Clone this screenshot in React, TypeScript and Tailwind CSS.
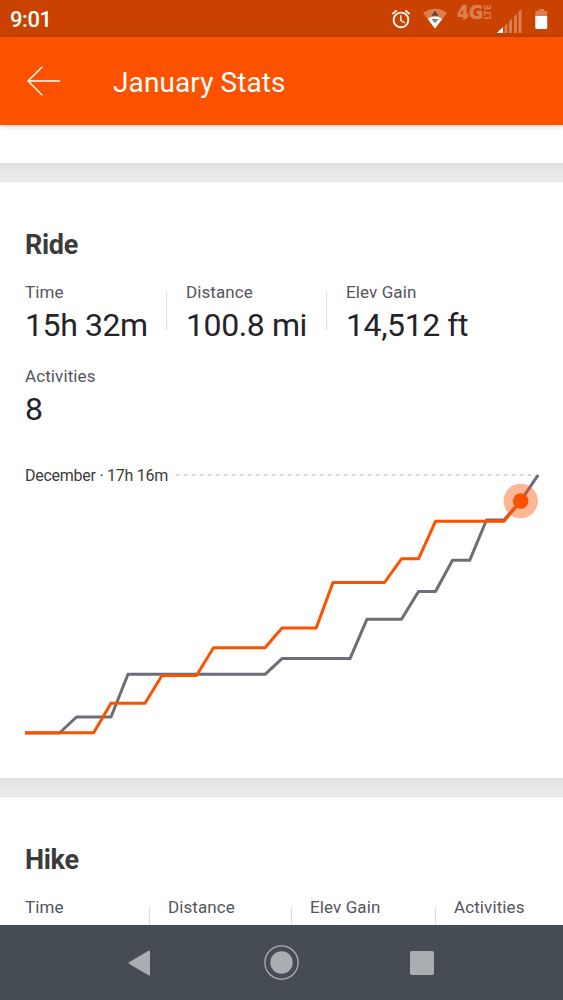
import { MdAccessAlarm } from "react-icons/md";

interface Stat {
  label: string;
  value: string;
  width: string;
}

const RIDE_STATS: Stat[] = [
  { label: "Time", value: "15h 32m", width: "w-[161px]" },
  { label: "Distance", value: "100.8 mi", width: "w-[160px]" },
  { label: "Elev Gain", value: "14,512 ft", width: "w-[160px]" },
];

const HIKE_STATS = [
  { label: "Time", width: "w-[143px]" },
  { label: "Distance", width: "w-[142px]" },
  { label: "Elev Gain", width: "w-[144px]" },
  { label: "Activities", width: "w-[100px]" },
];

const DECEMBER =
  "25,733 59.5,733 76.5,717 111,717 128,674.3 265,674.3 282,658.6 350,658.6 367,619.2 401.5,619.2 418.5,591.5 435.5,591.5 452.5,560.3 469.7,560.3 486.5,520 504,520 521,500.5 537.5,475.8";

const JANUARY =
  "25,732.8 93.7,732.8 111,703.3 145,703.3 162,675.5 196.5,675.5 213.5,647.8 265,647.8 282,628 316.2,628 333,582.5 384.5,582.5 401.5,558.8 418.5,558.8 435.5,521.3 504,521.3 520.7,501";

function StatusBar() {
  return (
    <div className="flex h-[37px] shrink-0 items-center justify-between bg-[#c94200] pl-[10px] text-white">
      <span className="mt-[3px] text-[22px] leading-none font-medium tracking-[-0.4px]">9:01</span>
      <div className="flex h-full items-start">
        <MdAccessAlarm className="mt-[8px] mr-[10px] size-[22px]" />
        <svg className="mt-[8px] mr-[9px] h-[21px] w-[26px]" viewBox="0 0 26 21">
          <path d="M1 5C8 -.7 18 -.7 25 5L13 20.5Z" fill="#db7f50" />
          <path d="M5.8 11C10 7.7 16 7.7 20.2 11L13 20.5Z" fill="#fff" />
          <path d="M13 2.6l3.6 5.2H9.4z" fill="#6b4030" />
          <path d="M9.4 11h7.2L13 15.3z" fill="#7b8482" />
        </svg>
        <svg className="mt-[4px] mr-[6px] h-[17px] w-[34px] overflow-visible font-['DejaVu_Sans']" viewBox="0 0 34 17" fill="#db7f50" stroke="#db7f50">
          <text x="0" y="15" fontSize="19" fontWeight="700" strokeWidth=".6" textLength="26" lengthAdjust="spacingAndGlyphs">4G</text>
          <text transform="translate(33.5 15.5) rotate(-90)" fontSize="8.5" fontWeight="700" strokeWidth="0" textLength="15" lengthAdjust="spacingAndGlyphs">LTE</text>
        </svg>
        <svg className="mt-[8px] mr-[13px] h-[25px] w-[25px]" viewBox="0 0 25 25">
          <path d="M0 25V24.5L5.5 19.5V25ZM7.5 25V18L10.5 15V25ZM12 25V13.5L15 10.5V25ZM17 25V8.5L19.8 5.7V25ZM21.5 25V4L24.5 1V25Z" fill="#db7f50" />
          <path d="M0 25L6 19V25Z" fill="#fff" />
        </svg>
        <svg className="mt-[9px] mr-[15px] h-[20px] w-[13px]" viewBox="0 0 13 20">
          <path d="M4 0h5v2h3.2V8H.3V2H4z" fill="#db7f50" />
          <path d="M.3 7h11.9v12a1 1 0 0 1-1 1H1.3a1 1 0 0 1-1-1z" fill="#fff" />
        </svg>
      </div>
    </div>
  );
}

function Header() {
  return (
    <header className="relative flex h-[88px] shrink-0 items-center bg-[#fc5200] pl-[27px] text-white shadow-[0_1px_5px_rgba(0,0,0,0.25)]">
      <svg className="h-[30px] w-[34px]" viewBox="0 0 34 30" fill="none" stroke="white" strokeWidth="1.4">
        <path d="M33 15H1M15.3 .8L1 15l14.3 14.2" />
      </svg>
      <h1 className="mt-[4px] ml-[52px] text-[28px] leading-none tracking-[0.1px]">January Stats</h1>
    </header>
  );
}

function Gap() {
  return <div className="h-[19px] shrink-0 border-b border-[#e4e4e4] bg-linear-to-b from-[#e2e2e2] to-[#ececec]" />;
}

function Divider({ className }: { className: string }) {
  return <div className={`h-[38px] w-px shrink-0 bg-[#dedede] ${className}`} />;
}

function ProgressChart() {
  return (
    <svg className="h-[270px] w-[563px]" viewBox="0 468 563 270" fill="none">
      <path d="M175.5 475H537" stroke="#c8c8c8" strokeWidth="1.5" strokeDasharray="4 4" />
      <polyline points={DECEMBER} stroke="#6d6d78" strokeWidth="3" strokeLinejoin="round" />
      <circle cx="537.5" cy="476" r="1.5" fill="#6d6d78" />
      <polyline points={JANUARY} stroke="#fc5200" strokeWidth="3" strokeLinejoin="round" />
      <circle cx="520.7" cy="501" r="17.2" fill="#fc5200" fillOpacity="0.42" />
      <circle cx="520.7" cy="501" r="7.8" fill="#fc5200" />
    </svg>
  );
}

function RideCard() {
  return (
    <section className="flex h-[596px] shrink-0 flex-col bg-white">
      <h2 className="mt-[49px] ml-[25px] text-[27px] leading-[28px] font-bold tracking-[-0.3px] text-[#3b3b3b]">Ride</h2>
      <div className="mt-[23px] ml-[25px] flex h-[61px]">
        {RIDE_STATS.map((stat, i) => (
          <div key={stat.label} className={`flex shrink-0 ${stat.width}`}>
            <div className="whitespace-nowrap">
              <div className="text-[17px] leading-[20px] tracking-[0.1px] text-[#55555c]">{stat.label}</div>
              <div className="mt-[4px] text-[32px] leading-[38px] tracking-[-0.4px] text-[#242428]">{stat.value}</div>
            </div>
            {i < 2 && <Divider className="mt-[10px] mr-[19px] ml-auto" />}
          </div>
        ))}
      </div>
      <div className="mt-[23px] ml-[25px]">
        <div className="text-[17px] leading-[20px] tracking-[0.1px] text-[#55555c]">Activities</div>
        <div className="mt-[4px] text-[32px] leading-[38px] text-[#242428]">8</div>
      </div>
      <div className="relative mt-[40px]">
        <span className="absolute top-[-2px] left-[25px] text-[16px] leading-[20px] tracking-[-0.26px] whitespace-nowrap text-[#3b3b3b]">
          December · 17h 16m
        </span>
        <ProgressChart />
      </div>
    </section>
  );
}

function HikeCard() {
  return (
    <section className="flex min-h-0 flex-1 flex-col overflow-hidden bg-white">
      <h2 className="mt-[49px] ml-[25px] text-[27px] leading-[28px] font-bold tracking-[-0.3px] text-[#3b3b3b]">Hike</h2>
      <div className="mt-[23px] ml-[25px] flex">
        {HIKE_STATS.map((stat, i) => (
          <div key={stat.label} className={`flex shrink-0 ${stat.width}`}>
            <div className="mr-auto text-[17px] leading-[20px] tracking-[0.1px] text-[#55555c]">{stat.label}</div>
            {i < 3 && <Divider className="mt-[10px] mr-[18px]" />}
          </div>
        ))}
      </div>
    </section>
  );
}

function NavBar() {
  return (
    <nav className="flex h-[75px] shrink-0 items-center bg-[#454d52]">
      <svg className="ml-[128px] h-[26px] w-[23px]" viewBox="0 0 23 26">
        <path d="M21 1.5v23L1.5 13z" fill="#a9aeb1" stroke="#a9aeb1" strokeWidth="2" strokeLinejoin="round" />
      </svg>
      <svg className="ml-[113px] size-[35px]" viewBox="0 0 35 35">
        <circle cx="17.5" cy="17.5" r="16.6" fill="none" stroke="#a9aeb1" strokeWidth="1.3" />
        <circle cx="17.5" cy="17.5" r="11.2" fill="#a9aeb1" />
      </svg>
      <div className="ml-[111px] size-[24px] rounded-[2px] bg-[#a9aeb1]" />
    </nav>
  );
}

export default function App() {
  return (
    <div className="flex h-[1000px] w-[563px] flex-col overflow-hidden bg-white font-['Roboto',sans-serif]">
      <StatusBar />
      <Header />
      <div className="h-[38px] shrink-0 bg-white" />
      <Gap />
      <RideCard />
      <Gap />
      <HikeCard />
      <NavBar />
    </div>
  );
}
